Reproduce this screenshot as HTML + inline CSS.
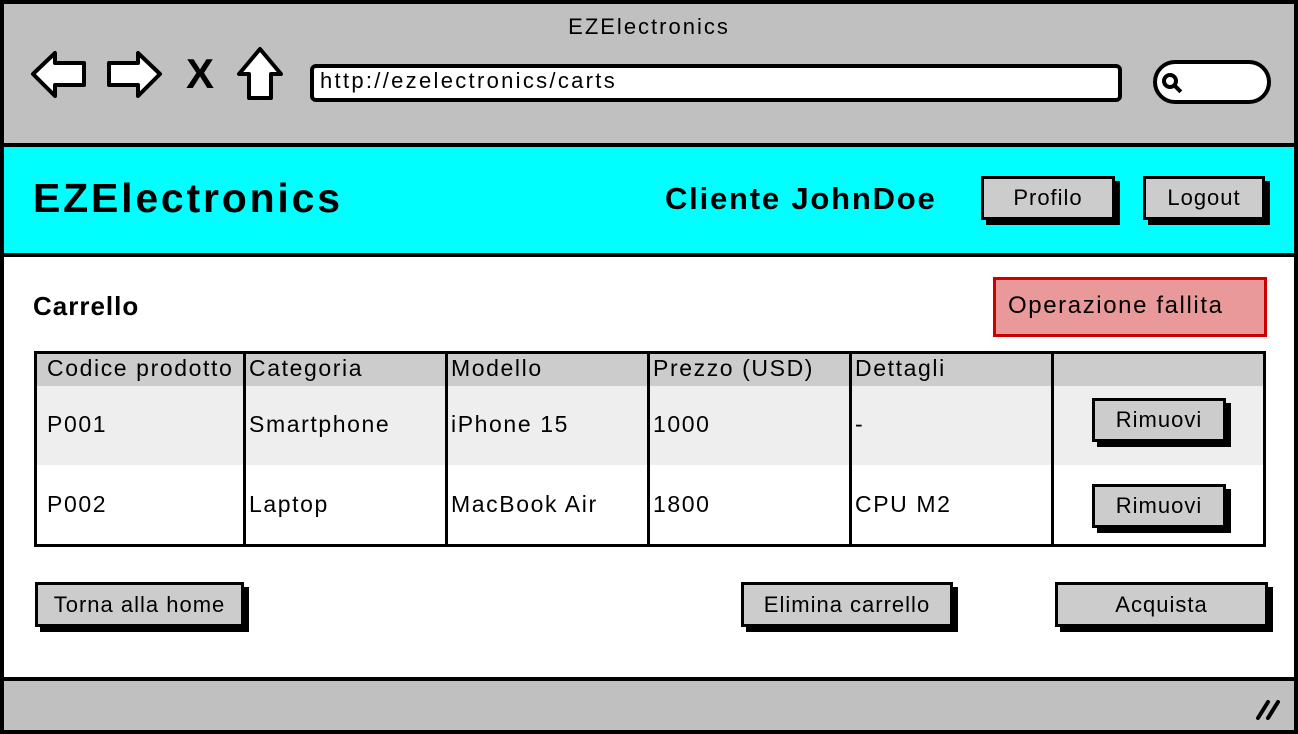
<!DOCTYPE html>
<html><head><meta charset="utf-8"><style>
*{margin:0;padding:0;box-sizing:border-box}
body{width:1298px;height:734px;position:relative;background:#fff;font-family:"Liberation Sans",sans-serif;overflow:hidden;color:#000}
.a{position:absolute}
.btn{position:absolute;background:#ccc;border:3px solid #000;box-shadow:5px 5px 0 #000;font-size:22px;letter-spacing:1px;display:flex;align-items:center;justify-content:center}
.t{position:absolute;font-size:23px;white-space:nowrap;letter-spacing:1.6px}
.vl{position:absolute;top:351px;height:196px;width:3px;background:#000}
</style></head><body>
<div class="a" style="left:0;top:0;width:1298px;height:734px;border:4px solid #000"></div>
<div class="a" style="left:4px;top:4px;width:1290px;height:141px;background:#c0c0c0"></div>
<div class="t" style="left:0;width:1298px;text-align:center;top:14px;font-size:22px;letter-spacing:2px">EZElectronics</div>
<svg class="a" style="left:28px;top:44px" width="265" height="60" viewBox="0 0 265 60">
<g stroke="#000" stroke-width="4" fill="#fff" stroke-linejoin="round">
<path d="M5 30 L27 9 L27 19 L56 19 L56 41 L27 41 L27 52 Z"/>
<path d="M132 30 L110 9 L110 19 L81 19 L81 41 L110 41 L110 52 Z"/>
<path d="M232 5 L211 30 L221 30 L221 54 L243 54 L243 30 L253 30 Z"/>
</g>
<text x="158" y="44" font-family="Liberation Sans" font-weight="bold" font-size="42">X</text>
</svg>
<div class="a" style="left:310px;top:64px;width:812px;height:38px;background:#fff;border:4px solid #000;border-radius:6px"></div>
<div class="t" style="left:320px;top:68px;font-size:22px;letter-spacing:2.3px">http://ezelectronics/carts</div>
<div class="a" style="left:1153px;top:60px;width:118px;height:44px;background:#fff;border:4px solid #000;border-radius:22px"></div>
<div class="a" style="left:1162px;top:73px;width:16px;height:16px;border:4px solid #000;border-radius:50%"></div>
<div class="a" style="left:1174px;top:87px;width:8px;height:4px;background:#000;transform:rotate(45deg)"></div>
<div class="a" style="left:0;top:143px;width:1298px;height:114px;background:#0ff;border:4px solid #000"></div>
<div class="t" style="left:33px;top:175px;font-size:41px;font-weight:bold;letter-spacing:2.8px">EZElectronics</div>
<div class="t" style="left:665px;top:181px;font-size:31px;font-weight:bold;letter-spacing:1.8px">Cliente JohnDoe</div>
<div class="btn" style="left:981px;top:176px;width:134px;height:44px">Profilo</div>
<div class="btn" style="left:1143px;top:176px;width:122px;height:44px">Logout</div>
<div class="t" style="left:33px;top:291px;font-size:26px;font-weight:bold;letter-spacing:1px">Carrello</div>
<div class="a" style="left:993px;top:277px;width:274px;height:60px;background:#e99999;border:3px solid #c00"></div>
<div class="t" style="left:1008px;top:292px;font-size:24px;letter-spacing:1.6px">Operazione fallita</div>
<div class="a" style="left:34px;top:351px;width:1232px;height:196px;border:3px solid #000;background:#fff"></div>
<div class="a" style="left:37px;top:354px;width:1226px;height:32px;background:#ccc"></div>
<div class="a" style="left:37px;top:386px;width:1226px;height:79px;background:#eee"></div>
<div class="vl" style="left:243px"></div><div class="vl" style="left:445px"></div><div class="vl" style="left:647px"></div><div class="vl" style="left:849px"></div><div class="vl" style="left:1051px"></div>
<div class="t" style="left:47px;top:355px">Codice prodotto</div>
<div class="t" style="left:249px;top:355px">Categoria</div>
<div class="t" style="left:451px;top:355px">Modello</div>
<div class="t" style="left:653px;top:355px">Prezzo (USD)</div>
<div class="t" style="left:855px;top:355px">Dettagli</div>
<div class="t" style="left:47px;top:411px">P001</div>
<div class="t" style="left:249px;top:411px">Smartphone</div>
<div class="t" style="left:451px;top:411px">iPhone 15</div>
<div class="t" style="left:653px;top:411px">1000</div>
<div class="t" style="left:855px;top:411px">-</div>
<div class="t" style="left:47px;top:491px">P002</div>
<div class="t" style="left:249px;top:491px">Laptop</div>
<div class="t" style="left:451px;top:491px">MacBook Air</div>
<div class="t" style="left:653px;top:491px">1800</div>
<div class="t" style="left:855px;top:491px">CPU M2</div>
<div class="btn" style="left:1092px;top:398px;width:134px;height:44px">Rimuovi</div>
<div class="btn" style="left:1092px;top:484px;width:134px;height:44px">Rimuovi</div>
<div class="btn" style="left:35px;top:582px;width:209px;height:45px">Torna alla home</div>
<div class="btn" style="left:741px;top:582px;width:212px;height:45px">Elimina carrello</div>
<div class="btn" style="left:1055px;top:582px;width:213px;height:45px">Acquista</div>
<div class="a" style="left:0;top:677px;width:1298px;height:57px;background:#c0c0c0;border:4px solid #000"></div>
<svg class="a" style="left:1254px;top:696px" width="30" height="26"><g stroke="#000" stroke-width="4" stroke-linecap="round"><path d="M4 22 L14 6"/><path d="M14 22 L24 6"/></g></svg>
</body></html>
